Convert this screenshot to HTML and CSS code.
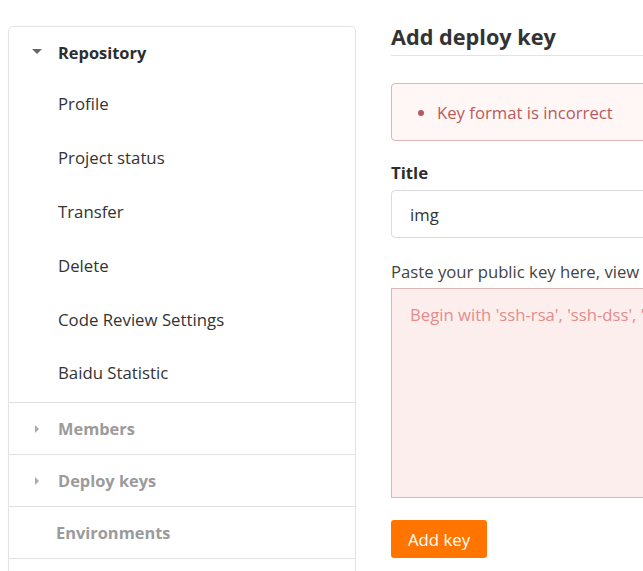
FILE: index.html
```html
<!DOCTYPE html>
<html>
<head>
<meta charset="utf-8">
<link rel="stylesheet" href="styles.css">
</head>
<body>
<div class="page">
  <aside class="sidebar">
    <div class="section open">
      <div class="sec-title first"><span class="caret down"></span>Repository</div>
      <ul class="items">
        <li>Profile</li>
        <li>Project status</li>
        <li>Transfer</li>
        <li>Delete</li>
        <li>Code Review Settings</li>
        <li>Baidu Statistic</li>
      </ul>
    </div>
    <div class="section"><div class="sec-title muted"><span class="caret right"></span>Members</div></div>
    <div class="section"><div class="sec-title muted"><span class="caret right"></span>Deploy keys</div></div>
    <div class="section"><div class="sec-title muted plain">Environments</div></div>
    <div class="section"><div class="sec-title muted plain">&nbsp;</div></div>
  </aside>
  <main class="content">
    <h2 class="heading">Add deploy key</h2>
    <div class="alert"><ul><li>Key format is incorrect</li></ul></div>
    <label class="field-label">Title</label>
    <div class="input">img</div>
    <p class="hint">Paste your public key here, view</p>
    <div class="textarea">Begin with 'ssh-rsa', 'ssh-dss', 'ssh-ed25519', 'ecdsa-sha2-nistp256'</div>
    <button class="btn">Add key</button>
  </main>
</div>
</body>
</html>
```
FILE: styles.css
```css
html, body { margin: 0; padding: 0; background: #fff; }
body {
  font-family: "Open Sans", "Noto Sans", sans-serif;
  font-size: 16.7px;
  color: #333;
  overflow: hidden;
  width: 643px;
  height: 571px;
}
.page {
  display: flex;
  align-items: flex-start;
  padding: 26px 0 0 8px;
  gap: 35px;
}
.sidebar {
  width: 346px;
  flex: none;
  border: 1px solid #e1e3e8;
  border-radius: 5px;
  background: #fff;
}
.section { border-top: 1px solid #e0e0e0; }
.section:first-child { border-top: none; }
.sec-title {
  display: flex;
  align-items: center;
  box-sizing: border-box;
  height: 51px;
  padding-top: 1px;
  padding-left: 49px;
  font-weight: 700;
  font-size: 16.4px;
  color: #2d2d2d;
  position: relative;
}
.sec-title.first { padding-top: 0; padding-bottom: 1px; }
.sec-title.muted { color: #9b9b9b; }
.sec-title.plain { padding-left: 47px; }
.caret {
  position: absolute;
  width: 0; height: 0;
}
.caret.down {
  left: 23px; top: 22px;
  border-left: 5px solid transparent;
  border-right: 5px solid transparent;
  border-top: 5px solid #666;
}
.caret.right {
  left: 26px; top: 22px;
  border-top: 4px solid transparent;
  border-bottom: 4px solid transparent;
  border-left: 4px solid #aaa;
}
.items { list-style: none; margin: -1px 0 0 0; padding: 0 0 2px 0; }
.items li {
  height: 53.8px;
  display: flex;
  align-items: center;
  padding-left: 49px;
  font-size: 16.8px;
  color: #333;
}
.content {
  flex: 1;
  min-width: 0;
}
.heading {
  margin: 0;
  font-size: 21.7px;
  font-weight: 700;
  color: #333;
  line-height: 22px;
  padding: 0 0 7px 0;
  border-bottom: 1px solid #e3e3e3;
  white-space: nowrap;
}
.alert {
  margin-top: 27px;
  width: 400px;
  height: 58px;
  box-sizing: border-box;
  border: 1px solid #e0b4b4;
  border-radius: 4px;
  background: #fff6f6;
  color: #b85a5b;
  display: flex;
  align-items: center;
}
.alert ul { margin: 0; padding-left: 45px; }
.field-label {
  display: block;
  margin-top: 21px;
  font-weight: 700;
  font-size: 16.8px;
  color: #2d2d2d;
  line-height: 22px;
}
.input {
  margin-top: 6px;
  width: 400px;
  height: 48px;
  box-sizing: border-box;
  border: 1px solid #dcdce0;
  border-radius: 4px;
  display: flex;
  align-items: center;
  padding-left: 18px;
  color: #333;
}
.hint {
  margin: 23px 0 0 0;
  line-height: 22px;
  color: #444;
  white-space: nowrap;
}
.textarea {
  margin-top: 5px;
  width: 400px;
  height: 210px;
  box-sizing: border-box;
  border: 1px solid #e0b4b4;
  background: #fdeeee;
  color: #e48c8c;
  padding: 14px 18px;
  white-space: nowrap;
  overflow: hidden;
}
.btn {
  margin-top: 22px;
  display: block;
  width: 96px;
  height: 38px;
  border: none;
  border-radius: 3px;
  background: #ff7500;
  color: #fff;
  font-family: inherit;
  font-size: 16.8px;
  padding: 0;
}
```
